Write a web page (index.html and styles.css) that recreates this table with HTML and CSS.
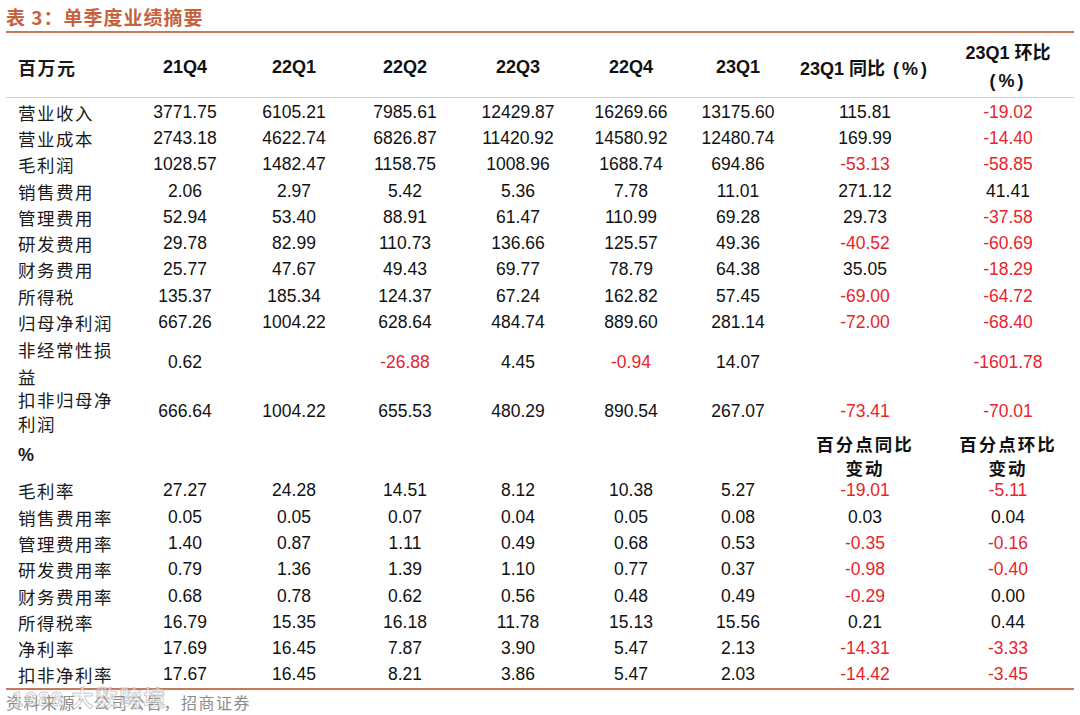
FILE: index.html
```html
<!DOCTYPE html>
<html lang="zh-CN">
<head>
<meta charset="utf-8">
<title>表3 单季度业绩摘要</title>
<link rel="stylesheet" href="styles.css">
</head>
<body>
<div class="page">
  <div class="title">表 3：单季度业绩摘要</div>
  <div class="table">
    <div class="row head">
      <div class="lab">百万元</div>
      <div>21Q4</div><div>22Q1</div><div>22Q2</div><div>22Q3</div><div>22Q4</div><div>23Q1</div>
      <div>23Q1 同比<span class="par">(%)</span></div>
      <div class="two">23Q1 环比<br><span class="pct">(%)</span></div>
    </div>
    <div class="body">
      <div class="row"><div class="lab">营业收入</div><div>3771.75</div><div>6105.21</div><div>7985.61</div><div>12429.87</div><div>16269.66</div><div>13175.60</div><div>115.81</div><div class="neg">-19.02</div></div>
      <div class="row"><div class="lab">营业成本</div><div>2743.18</div><div>4622.74</div><div>6826.87</div><div>11420.92</div><div>14580.92</div><div>12480.74</div><div>169.99</div><div class="neg">-14.40</div></div>
      <div class="row"><div class="lab">毛利润</div><div>1028.57</div><div>1482.47</div><div>1158.75</div><div>1008.96</div><div>1688.74</div><div>694.86</div><div class="neg">-53.13</div><div class="neg">-58.85</div></div>
      <div class="row"><div class="lab">销售费用</div><div>2.06</div><div>2.97</div><div>5.42</div><div>5.36</div><div>7.78</div><div>11.01</div><div>271.12</div><div>41.41</div></div>
      <div class="row"><div class="lab">管理费用</div><div>52.94</div><div>53.40</div><div>88.91</div><div>61.47</div><div>110.99</div><div>69.28</div><div>29.73</div><div class="neg">-37.58</div></div>
      <div class="row"><div class="lab">研发费用</div><div>29.78</div><div>82.99</div><div>110.73</div><div>136.66</div><div>125.57</div><div>49.36</div><div class="neg">-40.52</div><div class="neg">-60.69</div></div>
      <div class="row"><div class="lab">财务费用</div><div>25.77</div><div>47.67</div><div>49.43</div><div>69.77</div><div>78.79</div><div>64.38</div><div>35.05</div><div class="neg">-18.29</div></div>
      <div class="row"><div class="lab">所得税</div><div>135.37</div><div>185.34</div><div>124.37</div><div>67.24</div><div>162.82</div><div>57.45</div><div class="neg">-69.00</div><div class="neg">-64.72</div></div>
      <div class="row"><div class="lab">归母净利润</div><div>667.26</div><div>1004.22</div><div>628.64</div><div>484.74</div><div>889.60</div><div>281.14</div><div class="neg">-72.00</div><div class="neg">-68.40</div></div>
      <div class="row tall1"><div class="lab">非经常性损<br>益</div><div>0.62</div><div></div><div class="neg">-26.88</div><div>4.45</div><div class="neg">-0.94</div><div>14.07</div><div></div><div class="neg">-1601.78</div></div>
      <div class="row tall2"><div class="lab">扣非归母净<br>利润</div><div>666.64</div><div>1004.22</div><div>655.53</div><div>480.29</div><div>890.54</div><div>267.07</div><div class="neg">-73.41</div><div class="neg">-70.01</div></div>
      <div class="row sub"><div class="lab pc">%</div><div></div><div></div><div></div><div></div><div></div><div></div><div class="cj">百分点同比<br>变动</div><div class="cj">百分点环比<br>变动</div></div>
      <div class="row"><div class="lab">毛利率</div><div>27.27</div><div>24.28</div><div>14.51</div><div>8.12</div><div>10.38</div><div>5.27</div><div class="neg">-19.01</div><div class="neg">-5.11</div></div>
      <div class="row"><div class="lab">销售费用率</div><div>0.05</div><div>0.05</div><div>0.07</div><div>0.04</div><div>0.05</div><div>0.08</div><div>0.03</div><div>0.04</div></div>
      <div class="row"><div class="lab">管理费用率</div><div>1.40</div><div>0.87</div><div>1.11</div><div>0.49</div><div>0.68</div><div>0.53</div><div class="neg">-0.35</div><div class="neg">-0.16</div></div>
      <div class="row"><div class="lab">研发费用率</div><div>0.79</div><div>1.36</div><div>1.39</div><div>1.10</div><div>0.77</div><div>0.37</div><div class="neg">-0.98</div><div class="neg">-0.40</div></div>
      <div class="row"><div class="lab">财务费用率</div><div>0.68</div><div>0.78</div><div>0.62</div><div>0.56</div><div>0.48</div><div>0.49</div><div class="neg">-0.29</div><div>0.00</div></div>
      <div class="row"><div class="lab">所得税率</div><div>16.79</div><div>15.35</div><div>16.18</div><div>11.78</div><div>15.13</div><div>15.56</div><div>0.21</div><div>0.44</div></div>
      <div class="row"><div class="lab">净利率</div><div>17.69</div><div>16.45</div><div>7.87</div><div>3.90</div><div>5.47</div><div>2.13</div><div class="neg">-14.31</div><div class="neg">-3.33</div></div>
      <div class="row"><div class="lab">扣非净利率</div><div>17.67</div><div>16.45</div><div>8.21</div><div>3.86</div><div>5.47</div><div>2.03</div><div class="neg">-14.42</div><div class="neg">-3.45</div></div>
    </div>
  </div>
  <div class="source">资料来源：公司公告，招商证券</div>
  <div class="watermark"><span class="wm-num">1688</span> 大数跨境</div>
</div>
</body>
</html>
```

FILE: styles.css
```css
html, body {
  margin: 0;
  padding: 0;
  background: #ffffff;
}

.page {
  position: relative;
  width: 1068px;
  padding-left: 6px;
  height: 715px;
  overflow: hidden;
  font-family: "Liberation Sans", Arial, "Noto Sans CJK SC", sans-serif;
  color: #111111;
}

.title {
  padding-top: 4px;
  padding-bottom: 2px;
  line-height: 25px;
  font-family: "Noto Sans CJK SC", sans-serif;
  font-weight: 700;
  font-size: 19px;
  letter-spacing: 1px;
  color: #c4623c;
  border-bottom: 2px solid #c9785c;
}

.row {
  display: grid;
  grid-template-columns: 124px 110px 108px 114px 112px 114px 100px 154px 132px;
  align-items: center;
  height: 26.3px;
  font-size: 17.5px;
  text-align: center;
}

.row > div {
  white-space: nowrap;
}

.row .lab {
  text-align: left;
  padding-left: 12px;
  font-family: "Noto Sans CJK SC", sans-serif;
  font-size: 17.5px;
  letter-spacing: 1.5px;
  color: #1a1a1a;
}

.head {
  height: 60px;
  padding-top: 4px;
  font-weight: 700;
  font-size: 18px;
  border-bottom: 1px solid #e2cbc3;
}

.head .lab {
  font-weight: 700;
  font-size: 18px;
}

.head .two {
  line-height: 28px;
}

.head .par {
  margin-left: 8px;
  letter-spacing: 3px;
}

.head .pct {
  letter-spacing: 3px;
}

.body {
  padding-top: 1px;
  border-bottom: 2px solid #c9785c;
}

.row.tall1 {
  height: 52px;
}

.row.tall1 .lab {
  line-height: 27px;
}

.row.tall2 {
  height: 44px;
}

.row.tall2 .lab {
  line-height: 24px;
}

.row.sub {
  height: 46px;
}

.row.sub .pc {
  font-family: "Liberation Sans", Arial, sans-serif;
  font-weight: 700;
  font-size: 18px;
}

.row .cj {
  font-family: "Noto Sans CJK SC", sans-serif;
  font-weight: 700;
  font-size: 17.5px;
  letter-spacing: 2px;
  line-height: 24px;
}

.neg {
  color: #e8232b;
}

.source {
  padding-top: 1px;
  font-family: "Noto Sans CJK SC", sans-serif;
  font-size: 16px;
  letter-spacing: 1.5px;
  line-height: 22px;
  color: #8c8c8c;
}

.watermark {
  position: absolute;
  left: 12px;
  top: 680px;
  font-family: "Noto Sans CJK SC", sans-serif;
  font-weight: 700;
  font-size: 22px;
  letter-spacing: 2px;
  color: rgba(255, 255, 255, 0.55);
  -webkit-text-stroke: 1px rgba(140, 140, 140, 0.45);
}

.watermark .wm-num {
  font-family: "Liberation Sans", Arial, sans-serif;
  font-size: 20px;
}
```
